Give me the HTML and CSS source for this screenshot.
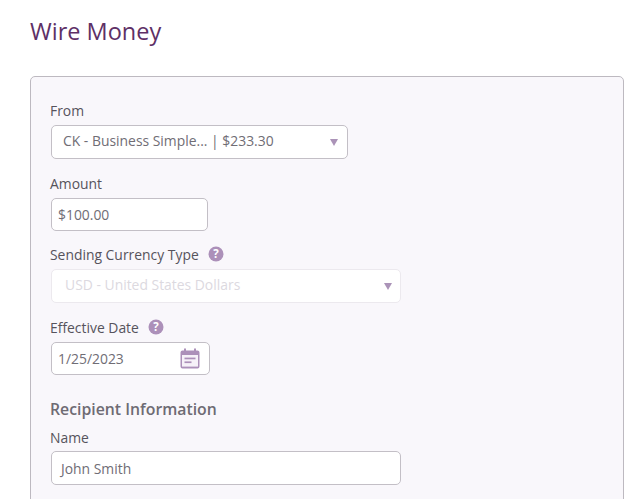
FILE: index.html
```
<!DOCTYPE html>
<html lang="en">
<head>
<meta charset="utf-8">
<title>Wire Money</title>
<link rel="stylesheet" href="styles.css">
</head>
<body>
<main class="page">
  <h1 class="title">Wire Money</h1>
  <form class="panel">
    <div class="field field-from">
      <label class="label raised">From</label>
      <div class="control select w-from">
        <span class="value value-select">CK - Business Simple... | $233.30</span>
        <span class="caret caret-from"></span>
      </div>
    </div>
    <div class="field field-amount">
      <label class="label raised">Amount</label>
      <div class="control w-amount short"><span class="value value-up">$100.00</span></div>
    </div>
    <div class="field field-currency">
      <label class="label raised">Sending Currency Type
        <svg class="help" viewBox="0 0 16 16" aria-hidden="true"><circle cx="8" cy="8" r="7.5" fill="#ac90b9"/><text x="8" y="12.2" text-anchor="middle" class="help-mark">?</text></svg>
      </label>
      <div class="control select w-wide disabled">
        <span class="value value-disabled">USD - United States Dollars</span>
        <span class="caret"></span>
      </div>
    </div>
    <div class="field field-date">
      <label class="label">Effective Date
        <svg class="help" viewBox="0 0 16 16" aria-hidden="true"><circle cx="8" cy="8" r="7.5" fill="#ac90b9"/><text x="8" y="12.2" text-anchor="middle" class="help-mark">?</text></svg>
      </label>
      <div class="control w-date short date">
        <span class="value value-up">1/25/2023</span>
        <svg class="cal" viewBox="0 0 20 21" aria-hidden="true">
          <path d="M4 0.5h2v2h8v-2h2v2h1.5a2 2 0 0 1 2 2v14a2 2 0 0 1-2 2h-15a2 2 0 0 1-2-2v-14a2 2 0 0 1 2-2h1.5z" fill="#ac90b9"/>
          <rect x="2" y="7" width="16" height="11.6" fill="#f6f1f8"/>
          <rect x="4.5" y="9.6" width="11" height="1.7" fill="#ac90b9"/>
          <rect x="4.5" y="13.4" width="7" height="1.7" fill="#ac90b9"/>
        </svg>
      </div>
    </div>
    <h2 class="section">Recipient Information</h2>
    <div class="field field-name">
      <label class="label">Name</label>
      <div class="control w-wide"><span class="value value-name">John Smith</span></div>
    </div>
  </form>
</main>
</body>
</html>
```
FILE: styles.css
```
html, body {
  margin: 0;
  height: 499px;
  overflow: hidden;
  background: #fff;
}
body {
  font-family: "Open Sans", "Liberation Sans", sans-serif;
  color: #56535c;
}
.page {
  padding: 15px 12px 0 30px;
}
.title {
  margin: 0 0 28px;
  font-size: 23.5px;
  line-height: 33px;
  font-weight: 400;
  color: #5e3066;
}
.panel {
  box-sizing: border-box;
  height: 520px;
  padding: 24px 20px 0;
  background: #f9f7fb;
  border: 1px solid #bdb9c0;
  border-radius: 5px;
}
.field-amount { margin-top: 15px; }
.field-currency { margin-top: 14px; }
.field-date { margin-top: 14px; }
.field-name { margin-top: 8px; }
.label {
  box-sizing: border-box;
  display: flex;
  align-items: center;
  height: 20px;
  margin: 0 0 4px -1px;
  font-size: 13.9px;
  color: #56535c;
}
.raised { padding-bottom: 2px; }
.field-date .label { margin-bottom: 5px; }
.help {
  width: 16px;
  height: 16px;
  margin-left: 9px;
}
.help-mark {
  font-size: 11.5px;
  font-weight: 700;
  fill: #fff;
}
.control {
  box-sizing: border-box;
  display: flex;
  align-items: center;
  height: 34px;
  background: #fff;
  border: 1px solid #c3bfc6;
  border-radius: 5px;
}
.short { height: 33px; }
.w-from { width: 297px; }
.w-amount { width: 157px; }
.w-wide { width: 350px; }
.w-date { width: 159px; }
.disabled { border-color: #ece9ee; }
.value {
  padding-left: 6px;
  font-size: 13.9px;
  color: #706d75;
}
.value-up { padding-bottom: 1px; }
.value-select { padding: 0 0 3px 11px; }
.value-disabled { padding: 0 0 3px 13px; color: #dcd9df; }
.value-name { padding-left: 9px; }
.select, .date {
  justify-content: space-between;
}
.caret {
  width: 0;
  height: 0;
  margin-right: 8px;
  border-left: 4px solid transparent;
  border-right: 4px solid transparent;
  border-top: 7px solid #ab93b8;
}
.caret-from { margin-right: 9px; }
.cal {
  width: 20px;
  height: 21px;
  margin-right: 9px;
}
.section {
  margin: 24px 0 0 -1px;
  font-size: 15.8px;
  line-height: 20px;
  font-weight: 600;
  color: #6e6b73;
}
```
